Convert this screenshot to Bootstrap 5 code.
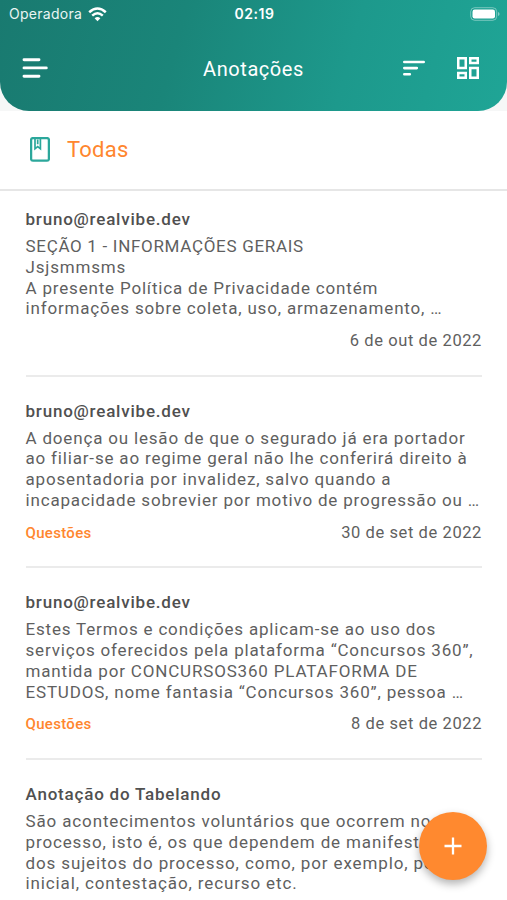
<!DOCTYPE html>
<html lang="pt-BR">
<head>
<meta charset="utf-8">
<meta name="viewport" content="width=device-width, initial-scale=1">
<title>Anotações</title>
<link href="https://cdn.jsdelivr.net/npm/bootstrap@5.3.0/dist/css/bootstrap.min.css" rel="stylesheet">
<style>
body { font-family: Roboto, "Noto Sans", sans-serif; color: #5f5f5f; background: #fff; }
svg { display: block; flex: none; }
.top-wrap { background: #f6f7f7; }
.top-bg { height: 111px; color: #fff; border-radius: 0 0 29px 29px; background: linear-gradient(105deg, #197a70 0%, #1a8579 35%, #1d998c 68%, #1fa596 100%); }
.status { height: 28px; padding: 0 7px 0 9px; font: 400 14px/28px Inter, sans-serif; }
.status > * { flex: 1 1 0; }
.carrier { letter-spacing: .27px; gap: 6px; color: #e9f5f3; }
.clock { font-weight: 600; letter-spacing: .55px; }
.app-bar { height: 80px; padding: 0 28px 0 22px; }
.app-bar > * { flex: 1 1 0; }
.app-title { font-size: 20px; letter-spacing: .56px; padding: 1px 0 0 6px; }
.tools { gap: 32px; }
.filter { height: 79.5px; padding: 0 0 0 30px; gap: 17px; border-bottom: 2px solid #e6e6e6; }
.filter-name { font-size: 22px; letter-spacing: .25px; color: #ff862e; }
.notes { padding: 0 25px 0 25.5px; }
.note { height: 191.75px; padding-top: 23px; border-bottom: 2px solid #ebebeb; }
.note:first-child { height: 186px; padding-top: 17.5px; }
.note:last-child { height: auto; border-bottom: 0; }
.note-title { font-size: 17px; line-height: 22px; font-weight: 500; letter-spacing: .79px; margin-bottom: 6px; color: #505050; }
.note-text { font-size: 17px; line-height: 20.75px; letter-spacing: .82px; height: 83px; white-space: nowrap; }
.wider .note-text { letter-spacing: .87px; }
.caps-line { letter-spacing: .69px; }
.note-foot { line-height: 20px; margin-top: 12px; }
.tag { font-size: 15px; font-weight: 500; letter-spacing: .32px; color: #ff862e; }
.date { font-size: 16.5px; letter-spacing: .59px; }
.fab { right: 20px; top: 812px; width: 68px; height: 68px; background: #ff892f; box-shadow: 0 4px 9px rgba(0,0,0,.3); }
</style>
</head>
<body>
<header class="top-wrap">
  <div class="top-bg">
    <div class="status d-flex align-items-center">
      <div class="carrier d-flex align-items-center">Operadora
        <svg width="19" height="15" viewBox="0 0 19 15" fill="none" stroke="#fff" stroke-width="2.5"><path d="M1.2 5.2Q9.5-2.2 17.8 5.2M4.2 8.6Q9.5 3.8 14.8 8.6"/><path d="M9.5 14.2 6.6 11.2Q9.5 8.8 12.4 11.2Z" fill="#fff" stroke="none"/></svg>
      </div>
      <div class="clock text-center">02:19</div>
      <div class="d-flex justify-content-end">
        <svg width="30" height="14" viewBox="0 0 30 14"><rect x=".7" y=".7" width="26" height="12.6" rx="4" fill="none" stroke="#fff" stroke-opacity=".4"/><rect x="2.5" y="2.5" width="22.5" height="9" rx="2.2" fill="#fff"/><path d="M28 5v4q1.6-.5 1.6-2T28 5" fill="#fff" opacity=".45"/></svg>
      </div>
    </div>
    <nav class="app-bar d-flex align-items-center">
      <div><svg width="26" height="20" viewBox="0 0 26 20" stroke="#fff" stroke-width="2.9" stroke-linecap="round"><path d="M2 1.7h15M2 9.9h22.3M2 18.3h15"/></svg></div>
      <div class="app-title text-center">Anotações</div>
      <div class="tools d-flex align-items-center justify-content-end">
        <svg width="22" height="16" viewBox="0 0 22 16" stroke="#fff" stroke-width="2.6" stroke-linecap="round"><path d="M1.3 2h19.4M1.3 8.1h12.5M1.3 14.3h5.5"/></svg>
        <svg width="22" height="22" viewBox="0 0 22 22" fill="none" stroke="#fff" stroke-width="2.5"><path d="M1.25 1.25h7.5v9.8h-7.5zM13.25 1.25h7.5v4.7h-7.5zM1.25 16.05h7.5v4.7h-7.5zM13.25 10.95h7.5v9.8h-7.5z"/></svg>
      </div>
    </nav>
  </div>
</header>
<section class="filter d-flex align-items-center">
  <svg width="20" height="25" viewBox="0 0 20 25" fill="none" stroke="#2ba79b"><rect x="1.1" y="1.1" width="17.8" height="22.6" rx="1.8" stroke-width="2.3"/><path d="M5 1.5v10.3l2.7-2.2 2.7 2.2V1.5M7.7 2.5v4.8" stroke-width="1.7"/></svg>
  <div class="filter-name">Todas</div>
</section>
<main class="notes">
  <article class="note">
    <div class="note-title">bruno@realvibe.dev</div>
    <div class="note-text"><span class="caps-line">SEÇÃO 1 - INFORMAÇÕES GERAIS</span><br>Jsjsmmsms<br>A presente Política de Privacidade contém<br>informações sobre coleta, uso, armazenamento, …</div>
    <div class="note-foot d-flex justify-content-end"><span class="date">6 de out de 2022</span></div>
  </article>
  <article class="note">
    <div class="note-title">bruno@realvibe.dev</div>
    <div class="note-text">A doença ou lesão de que o segurado já era portador<br>ao filiar-se ao regime geral não lhe conferirá direito à<br>aposentadoria por invalidez, salvo quando a<br>incapacidade sobrevier por motivo de progressão ou …</div>
    <div class="note-foot d-flex justify-content-between"><span class="tag">Questões</span><span class="date">30 de set de 2022</span></div>
  </article>
  <article class="note">
    <div class="note-title">bruno@realvibe.dev</div>
    <div class="note-text">Estes Termos e condições aplicam-se ao uso dos<br>serviços oferecidos pela plataforma “Concursos 360”,<br>mantida por CONCURSOS360 PLATAFORMA DE<br>ESTUDOS, nome fantasia “Concursos 360”, pessoa …</div>
    <div class="note-foot d-flex justify-content-between"><span class="tag">Questões</span><span class="date">8 de set de 2022</span></div>
  </article>
  <article class="note wider">
    <div class="note-title">Anotação do Tabelando</div>
    <div class="note-text">São acontecimentos voluntários que ocorrem no<br>processo, isto é, os que dependem de manifestação<br>dos sujeitos do processo, como, por exemplo, petição<br>inicial, contestação, recurso etc.</div>
  </article>
</main>
<button type="button" class="fab btn rounded-circle border-0 p-0 position-absolute d-flex align-items-center justify-content-center" aria-label="Adicionar">
  <svg width="18" height="18" viewBox="0 0 18 18" stroke="#fff" stroke-width="2.3"><path d="M9 .5v17M.5 9h17"/></svg>
</button>
<script src="https://cdn.jsdelivr.net/npm/bootstrap@5.3.0/dist/js/bootstrap.bundle.min.js"></script>
</body>
</html>
